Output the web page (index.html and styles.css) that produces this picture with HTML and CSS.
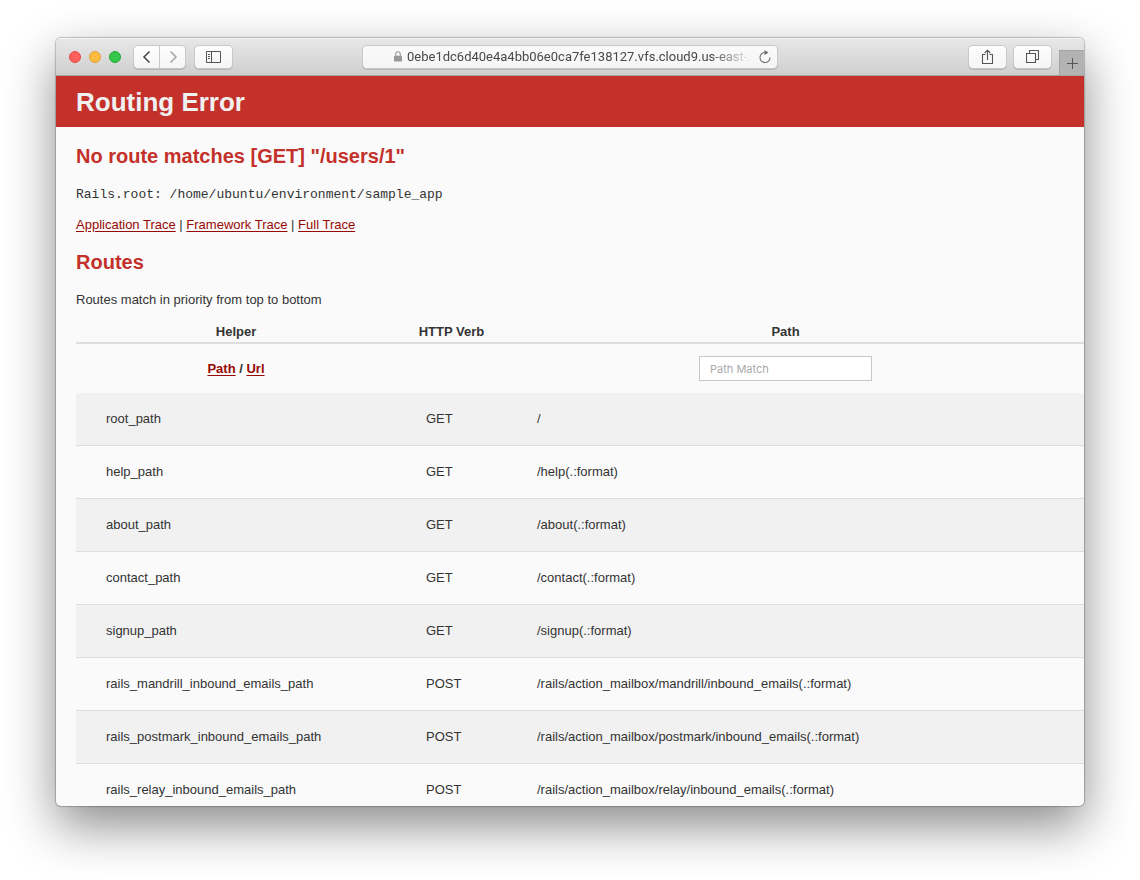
FILE: index.html
```html
<!DOCTYPE html>
<html lang="en">
<head>
<meta charset="utf-8">
<title>Action Controller: Exception caught</title>
<link rel="stylesheet" href="styles.css">
</head>
<body>
<div class="window">
  <div class="toolbar">
    <div class="toolbar-left">
      <div class="lights">
        <button class="light light-close" aria-label="Close"></button>
        <button class="light light-minimize" aria-label="Minimize"></button>
        <button class="light light-zoom" aria-label="Zoom"></button>
      </div>
      <div class="nav-group">
        <button class="tool tool-nav" aria-label="Back"><svg width="10" height="14" viewBox="0 0 10 14"><path d="M7.500 1.500 2 7l5.500 5.500" fill="none" stroke="#4b4b4b" stroke-width="1.600"/></svg></button>
        <button class="tool tool-nav" aria-label="Forward"><svg width="10" height="14" viewBox="0 0 10 14"><path d="M2.500 1.500 8 7l-5.500 5.500" fill="none" stroke="#a9a9a9" stroke-width="1.600"/></svg></button>
      </div>
      <button class="tool" aria-label="Show sidebar"><svg width="15" height="12" viewBox="0 0 15 12"><path d="M.5.5h14v11H.5zM5.500.5v11M2 3.500h2M2 5.500h2M2 7.500h2" fill="none" stroke="#555" stroke-width="1"/></svg></button>
    </div>
    <div class="address">
      <svg class="lock" width="8" height="11" viewBox="0 0 8 11"><path d="M1.700 5V3.200a2.300 2.500 0 0 1 4.600 0V5" fill="none" stroke="#999" stroke-width="1.100"/><rect x="0" y="4.800" width="8" height="5.800" rx=".7" fill="#999"/></svg>
      <span class="address-text">0ebe1dc6d40e4a4bb06e0ca7fe138127.vfs.cloud9.us-east-2</span>
      <button class="reload" aria-label="Reload"><svg width="14" height="14" viewBox="0 0 14 14"><path d="M7 2.500a5 5 0 1 0 5 5" fill="none" stroke="#707070" stroke-width="1.100"/><path d="M6.500 0 10.500 2.600 6.500 5.200z" fill="#707070"/></svg></button>
    </div>
    <div class="toolbar-right">
      <button class="tool" aria-label="Share"><svg width="13" height="16" viewBox="0 0 13 16"><path d="M4.500 5.500H1.500v9h10v-9H8.500M6.500 11V1.200M3.700 4l2.800-2.800L9.300 4" fill="none" stroke="#555" stroke-width="1.100"/></svg></button>
      <button class="tool" aria-label="Show all tabs"><svg width="13" height="13" viewBox="0 0 13 13"><path d="M.5 3.500h9v9h-9zM3.500 3.500v-3h9v9h-3" fill="none" stroke="#555" stroke-width="1.100"/></svg></button>
      <button class="new-tab" aria-label="New tab"><svg width="11" height="11" viewBox="0 0 11 11"><path d="M5.500 0v11M0 5.500h11" stroke="#555" stroke-width="1"/></svg></button>
    </div>
  </div>
  <div class="page">
    <header class="error-header"><h1>Routing Error</h1></header>
    <main class="content">
      <h2>No route matches [GET] "/users/1"</h2>
      <p class="root"><code>Rails.root: /home/ubuntu/environment/sample_app</code></p>
      <p class="traces"><a href="#application">Application Trace</a> | <a href="#framework">Framework Trace</a> | <a href="#full">Full Trace</a></p>
      <h2>Routes</h2>
      <p class="note">Routes match in priority from top to bottom</p>
      <table class="routes">
        <colgroup><col class="col-helper"><col class="col-verb"><col><col class="col-action"></colgroup>
        <thead>
          <tr class="names"><th>Helper</th><th>HTTP Verb</th><th>Path</th><th></th></tr>
          <tr class="filters"><th><a href="#path">Path</a> / <a href="#url">Url</a></th><th></th><th><input class="search" type="search" placeholder="Path Match" aria-label="Path Match"></th><th></th></tr>
        </thead>
        <tbody>
          <tr><td>root_path</td><td>GET</td><td>/</td><td></td></tr>
          <tr><td>help_path</td><td>GET</td><td>/help(.:format)</td><td></td></tr>
          <tr><td>about_path</td><td>GET</td><td>/about(.:format)</td><td></td></tr>
          <tr><td>contact_path</td><td>GET</td><td>/contact(.:format)</td><td></td></tr>
          <tr><td>signup_path</td><td>GET</td><td>/signup(.:format)</td><td></td></tr>
          <tr><td>rails_mandrill_inbound_emails_path</td><td>POST</td><td>/rails/action_mailbox/mandrill/inbound_emails(.:format)</td><td></td></tr>
          <tr><td>rails_postmark_inbound_emails_path</td><td>POST</td><td>/rails/action_mailbox/postmark/inbound_emails(.:format)</td><td></td></tr>
          <tr><td>rails_relay_inbound_emails_path</td><td>POST</td><td>/rails/action_mailbox/relay/inbound_emails(.:format)</td><td></td></tr>
        </tbody>
      </table>
    </main>
  </div>
</div>
</body>
</html>
```
FILE: styles.css
```css
* { box-sizing: border-box; }

body {
  display: flex;
  height: 100vh;
  margin: 0;
  padding: 38px 56px 74px;
  background: #fff;
  color: #333;
  font: 13px/18px "Liberation Sans", Arial, sans-serif;
}

button { padding: 0; border: 0; background: none; }
svg { display: block; }

.window {
  display: flex;
  flex: 1;
  flex-direction: column;
  min-width: 0;
  overflow: hidden;
  border-radius: 5px;
  background: #fafafa;
  box-shadow: 0 0 1px 1px rgba(0, 0, 0, .22), 0 20px 50px rgba(0, 0, 0, .46);
}

.toolbar {
  display: grid;
  flex: none;
  grid-template-columns: 1fr minmax(0, 414px) 1fr;
  align-items: center;
  height: 38px;
  border-bottom: 1px solid #a5a5a5;
  background: linear-gradient(#e8e8e8, #cfcfcf);
  box-shadow: inset 0 1px #f4f4f4;
}

.toolbar-left { display: flex; align-items: center; padding-left: 13px; }
.lights { display: flex; gap: 8px; margin-right: 13px; }
.light { width: 12px; height: 12px; border: 1px solid; border-radius: 50%; }
.light-close { border-color: #e24b48; background: #fc605c; }
.light-minimize { border-color: #dea13a; background: #fdbc40; }
.light-zoom { border-color: #27a637; background: #34c84a; }

.nav-group { display: flex; gap: 1px; margin-right: 10px; }
.tool {
  display: flex;
  align-items: center;
  justify-content: center;
  width: 37px;
  height: 22px;
  border-radius: 4px;
  background: linear-gradient(#fdfdfd, #f5f5f5);
  box-shadow: 0 0 0 1px #c9c9c9, 0 1px 0 1px #b4b4b4;
}
.tool-nav { width: 25px; }
.nav-group .tool:first-child { border-radius: 4px 0 0 4px; }
.nav-group .tool:last-child { border-radius: 0 4px 4px 0; }

.address {
  display: flex;
  align-items: center;
  height: 22px;
  padding: 0 5px 0 31px;
  border-radius: 4px;
  background: linear-gradient(#fafafa, #f5f5f5);
  box-shadow: 0 0 0 1px #c9c9c9, 0 1px 0 1px #b4b4b4;
}
.lock { flex: none; margin-right: 5px; }
.address-text {
  flex: 1;
  overflow: hidden;
  color: #484848;
  font: 13px/20px Roboto, sans-serif;
  white-space: nowrap;
  -webkit-mask-image: linear-gradient(to right, #000 88%, transparent);
  mask-image: linear-gradient(to right, #000 88%, transparent);
}
.reload { flex: none; margin-left: 6px; }

.toolbar-right { display: flex; align-items: center; align-self: stretch; justify-content: flex-end; gap: 8px; }
.new-tab {
  display: flex;
  align-items: center;
  justify-content: center;
  align-self: flex-end;
  width: 25px;
  height: 25px;
  border: 1px solid #a4a4a4;
  border-width: 1px 0 0 1px;
  background: #b3b3b3;
}

.page { flex: 1; min-height: 0; overflow: hidden; }
.error-header { padding: 9px 20px 7px; background: #c3312a; color: #f0f0f0; }
h1 { margin: 0; font-size: 26px; line-height: 35px; }

.content { padding: 16px 0 0 20px; }
h2 { margin: 0; color: #c3312a; font-size: 20px; line-height: 26px; }
p { margin: 0; }
code { font: 13px/18px "Liberation Mono", "Courier New", monospace; }
.root { padding: 16px 0 12px; }
.traces { padding-bottom: 15px; }
.note { padding: 16px 0 14px; }
a { color: #980905; text-underline-offset: 2px; }

.routes { width: 100%; border-spacing: 0; table-layout: fixed; }
.col-helper { width: 320px; }
.col-verb { width: 111px; }
.col-action { width: 20px; }
th { padding: 0; text-align: center; }
.names th { padding-bottom: 1px; border-bottom: 2px solid #ddd; }
.filters th { height: 49px; }
td { height: 53px; padding: 0 0 0 30px; border-bottom: 1px solid #ddd; white-space: nowrap; }
tbody tr:nth-child(odd) { background: #f1f1f1; }

.search {
  width: 173px;
  height: 25px;
  padding: 0 10px;
  border: 1px solid #c8c8c8;
  border-radius: 0;
  background: #fff;
  color: #333;
  font: 11px/16px Inter, sans-serif;
  vertical-align: middle;
  appearance: none;
}
.search::placeholder { color: #aaa; }
```
